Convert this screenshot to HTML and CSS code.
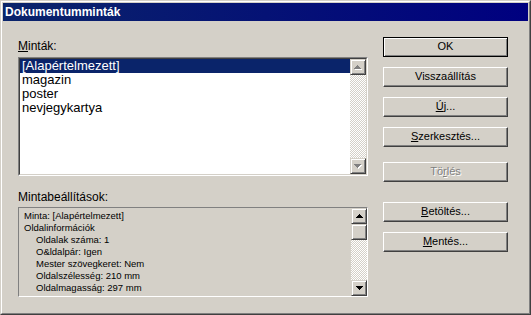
FILE: index.html
```html
<!DOCTYPE html>
<html lang="hu">
<head>
    <meta charset="UTF-8">
    <meta name="viewport" content="width=device-width, initial-scale=1.0">
    <title>Dokumentumminták</title>
    <link rel="stylesheet" href="styles.css">
</head>
<body>
    <div class="window">
        <div class="frame">
            <div class="titlebar">Dokumentumminták</div>
            <div class="content">
                <div class="left">
                    <div class="label"><u>M</u>inták:</div>
                    <div class="listbox">
                        <div class="listbox-inner">
                            <ul class="items">
                                <li class="selected">[Alapértelmezett]</li>
                                <li>magazin</li>
                                <li>poster</li>
                                <li>nevjegykartya</li>
                            </ul>
                            <div class="scrollbar">
                                <div class="sb-btn">
                                    <svg width="8" height="5" viewBox="0 0 8 5" shape-rendering="crispEdges">
                                        <path d="M4 1h1v1h1v1h1v1h1v1H1V4h1V3h1V2h1z" fill="#fff"/>
                                        <path d="M3 0h1v1h1v1h1v1h1v1H0V3h1V2h1V1h1z" fill="#808080"/>
                                    </svg>
                                </div>
                                <div class="sb-track"></div>
                                <div class="sb-btn">
                                    <svg width="8" height="5" viewBox="0 0 8 5" shape-rendering="crispEdges">
                                        <path d="M1 1h7v1H7v1H6v1H5v1H4V4H3V3H2V2H1z" fill="#fff"/>
                                        <path d="M0 0h7v1H6v1H5v1H4v1H3V3H2V2H1V1H0z" fill="#808080"/>
                                    </svg>
                                </div>
                            </div>
                        </div>
                    </div>
                    <div class="label label-second">Mintabeállítások:</div>
                    <div class="infobox">
                        <div class="info-lines">
                            <div>Minta: [Alapértelmezett]</div>
                            <div>Oldalinformációk</div>
                            <div class="indent">Oldalak száma: 1</div>
                            <div class="indent">O&amp;ldalpár: Igen</div>
                            <div class="indent">Mester szövegkeret: Nem</div>
                            <div class="indent">Oldalszélesség: 210 mm</div>
                            <div class="indent">Oldalmagasság: 297 mm</div>
                        </div>
                        <div class="scrollbar">
                            <div class="sb-btn">
                                <svg width="7" height="4" viewBox="0 0 7 4" shape-rendering="crispEdges">
                                    <path d="M3 0h1v1h1v1h1v1h1v1H0V3h1V2h1V1h1z" fill="#000"/>
                                </svg>
                            </div>
                            <div class="sb-thumb"></div>
                            <div class="sb-track"></div>
                            <div class="sb-btn">
                                <svg width="7" height="4" viewBox="0 0 7 4" shape-rendering="crispEdges">
                                    <path d="M0 0h7v1H6v1H5v1H4v1H3V3H2V2H1V1H0z" fill="#000"/>
                                </svg>
                            </div>
                        </div>
                    </div>
                </div>
                <div class="buttons">
                    <button class="btn btn-default">OK</button>
                    <button class="btn">Visszaállítás</button>
                    <button class="btn"><u>Ú</u>j...</button>
                    <button class="btn"><u>S</u>zerkesztés...</button>
                    <button class="btn btn-disabled btn-gap">Tö<u>r</u>lés</button>
                    <button class="btn btn-gap-large"><u>B</u>etöltés...</button>
                    <button class="btn"><u>M</u>entés...</button>
                </div>
            </div>
        </div>
    </div>
</body>
</html>
```

FILE: styles.css
```css
body {
    margin: 0;
    background-color: #d4d0c8;
    font-family: "Liberation Sans", Arial, sans-serif;
    color: #000;
}
.window {
    width: 531px;
    height: 315px;
    box-sizing: border-box;
    border: 1px solid;
    border-color: #d4d0c8 #404040 #404040 #d4d0c8;
    background-color: #d4d0c8;
}
.frame {
    height: 100%;
    box-sizing: border-box;
    border: 1px solid;
    border-color: #fff #808080 #808080 #fff;
    padding: 1px;
}
.titlebar {
    height: 18px;
    line-height: 18px;
    padding-left: 2px;
    background: linear-gradient(to right, #0a246a, #000080);
    color: #fff;
    font-weight: bold;
    font-size: 12px;
}
.content {
    display: flex;
    gap: 15px;
    padding: 16px 0 0 15px;
}
.left {
    width: 350px;
}
.label {
    font-size: 12px;
    line-height: 14px;
    margin-top: 2px;
    margin-bottom: 4px;
}
.label-second {
    margin-top: 14px;
    margin-bottom: 3px;
}
.listbox {
    height: 119px;
    box-sizing: border-box;
    border: 1px solid;
    border-color: #808080 #fff #fff #808080;
}
.listbox-inner {
    height: 100%;
    box-sizing: border-box;
    border: 1px solid;
    border-color: #404040 #d4d0c8 #d4d0c8 #404040;
    background-color: #fff;
    display: flex;
}
.items {
    flex: 1;
    margin: 0;
    padding: 0;
    list-style: none;
    font-size: 13px;
    line-height: 14px;
}
.items li {
    padding-left: 2px;
}
.items li.selected {
    background-color: #0a246a;
    color: #fff;
}
.infobox {
    height: 90px;
    box-sizing: border-box;
    border: 1px solid;
    border-color: #808080 #fff #fff #808080;
    display: flex;
}
.info-lines {
    flex: 1;
    padding: 2px 0 0 5px;
    font-size: 9.5px;
    line-height: 12px;
}
.indent {
    padding-left: 12px;
}
.scrollbar {
    width: 16px;
    display: flex;
    flex-direction: column;
}
.sb-btn, .sb-thumb {
    height: 16px;
    box-sizing: border-box;
    border: 1px solid;
    border-color: #d4d0c8 #404040 #404040 #d4d0c8;
    box-shadow: inset 1px 1px #fff, inset -1px -1px #808080;
    background-color: #d4d0c8;
    display: flex;
    align-items: center;
    justify-content: center;
}
.sb-track {
    flex: 1;
    background: repeating-conic-gradient(#fff 0 25%, #d4d0c8 0 50%) 0 0 / 2px 2px;
}
.buttons {
    display: flex;
    flex-direction: column;
    gap: 10px;
    width: 125px;
}
.btn {
    height: 20px;
    box-sizing: border-box;
    padding: 0 0 2px;
    margin: 0;
    border: 1px solid;
    border-color: #fff #404040 #404040 #fff;
    box-shadow: inset -1px -1px #808080;
    background-color: #d4d0c8;
    font-family: "Liberation Sans", Arial, sans-serif;
    font-size: 11px;
    color: #000;
    display: flex;
    align-items: center;
    justify-content: center;
}
.btn-default {
    border-color: #000;
    box-shadow: inset 1px 1px #fff, inset -1px -1px #808080;
}
.btn-disabled {
    color: #808080;
    text-shadow: 1px 1px #fff;
}
.btn-gap {
    margin-top: 5px;
}
.btn-gap-large {
    margin-top: 10px;
}
```
